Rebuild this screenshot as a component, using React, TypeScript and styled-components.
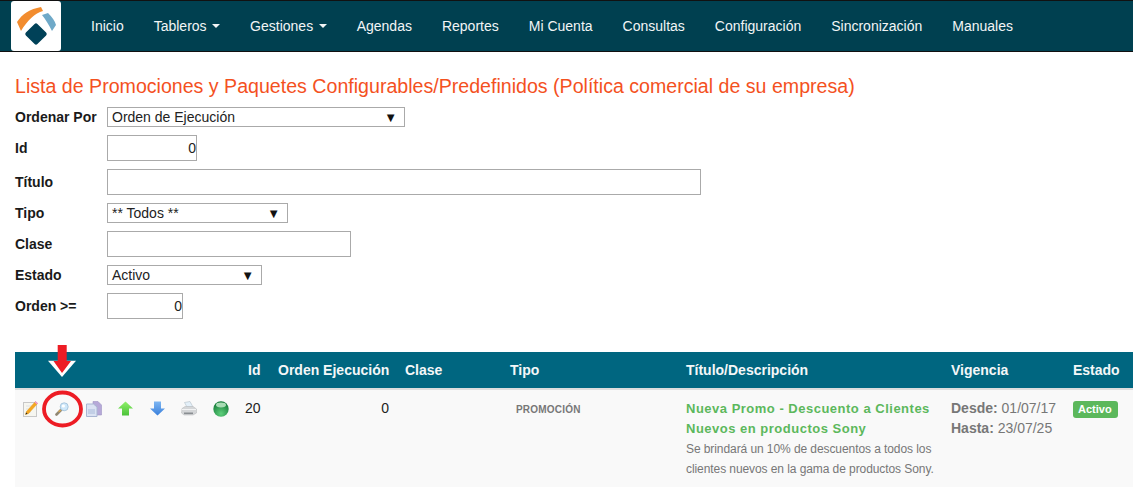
import React from 'react';
import styled, { createGlobalStyle } from 'styled-components';

const GlobalStyle = createGlobalStyle`
  html, body {
    margin: 0;
    padding: 0;
    background: #fff;
    overflow: hidden;
    font-family: "Liberation Sans", Arial, sans-serif;
    font-size: 14px;
    color: #333;
  }
`;

const Page = styled.div`
  position: relative;
  width: 1133px;
  height: 487px;
  overflow: hidden;
`;

const Navbar = styled.nav`
  display: flex;
  align-items: center;
  height: 50px;
  padding-left: 11px;
  background: #004050;
  border-top: 1px solid #111;
  border-bottom: 1px solid #111;
`;

const LogoBox = styled.div`
  display: flex;
  align-items: center;
  justify-content: center;
  width: 50px;
  height: 50px;
  margin-right: 15px;
  background: #fff;
  border-radius: 3px;
`;

const NavLink = styled.a`
  display: flex;
  align-items: center;
  padding: 0 15px;
  color: #f2f5f6;
  font-size: 14px;
  white-space: nowrap;
`;

const Caret = styled.span`
  display: inline-block;
  margin-left: 5.5px;
  border-top: 4px solid #f2f5f6;
  border-left: 4px solid transparent;
  border-right: 4px solid transparent;
`;

const Content = styled.main`
  padding: 21px 0 0 15px;
`;

const Title = styled.h1`
  margin: 0 0 4px;
  font-size: 19.6px;
  font-weight: 400;
  line-height: 26px;
  color: #f4511e;
`;

const FormRow = styled.div<{ $height: number }>`
  display: flex;
  align-items: center;
  height: ${p => p.$height}px;
`;

const Label = styled.label`
  width: 92px;
  font-size: 14px;
  font-weight: 700;
  color: #1a1a1a;
`;

const TextInput = styled.input<{ $width: number; $number?: boolean }>`
  box-sizing: border-box;
  width: ${p => p.$width}px;
  height: 26px;
  padding: 0 0 0 4px;
  border: 1px solid #aaa;
  background: #fff;
  font-family: inherit;
  font-size: 14px;
  color: #222;
  text-align: ${p => (p.$number ? 'right' : 'left')};
  outline: none;
`;

const SelectBox = styled.div<{ $width: number }>`
  box-sizing: border-box;
  display: flex;
  align-items: center;
  justify-content: space-between;
  width: ${p => p.$width}px;
  height: 20px;
  padding: 0 7px 0 4px;
  border: 1px solid #aaa;
  font-size: 14px;
  color: #222;
`;

const SelectArrow = styled.span`
  font-size: 13px;
  color: #111;
`;

const TableArea = styled.div`
  margin-top: 29px;
`;

const GRID_COLUMNS = '225px 30px 127px 105px 176px 265px 122px 68px';

const TableHead = styled.div`
  display: grid;
  grid-template-columns: ${GRID_COLUMNS};
  align-items: center;
  height: 36px;
  background: #006680;
  border-bottom: 2px solid #ddd;
`;

const HeadCell = styled.div`
  padding-left: 8px;
  font-size: 14px;
  font-weight: 700;
  color: #f4f7f8;
  white-space: nowrap;
`;

const TableRow = styled.div`
  display: grid;
  grid-template-columns: ${GRID_COLUMNS};
  align-items: start;
  height: 110px;
  padding-top: 8px;
  background: #f9f9f9;
`;

const Cell = styled.div<{ $right?: boolean }>`
  padding: 0 8px;
  font-size: 14px;
  line-height: 20px;
  color: #222;
  text-align: ${p => (p.$right ? 'right' : 'left')};
`;

const IdCell = styled(Cell)`
  padding: 0 0 0 5px;
`;

const PromoCell = styled(Cell)`
  padding-right: 4px;
`;

const IconRow = styled.div`
  display: flex;
  align-items: center;
  height: 17px;
  padding: 2px 0 0 8px;
`;

const IconSlot = styled.span`
  display: flex;
  flex: 0 0 31.7px;
`;

const TypeTag = styled.span`
  display: block;
  padding: 2px 0 0 6px;
  font-size: 10px;
  font-weight: 700;
  letter-spacing: 0.2px;
  color: #777;
`;

const PromoTitle = styled.div`
  margin-top: 1px;
  font-size: 13px;
  font-weight: 700;
  letter-spacing: 0.5px;
  line-height: 20px;
  color: #5cb85c;
`;

const PromoText = styled.div`
  font-size: 12px;
  line-height: 20px;
  letter-spacing: -0.08px;
  color: #777;
`;

const DateLine = styled.div`
  font-size: 14px;
  line-height: 20px;
  color: #777;
  white-space: nowrap;
  b {
    font-weight: 700;
  }
`;

const Badge = styled.span`
  display: inline-block;
  margin-top: 3px;
  padding: 0 6px 0 5px;
  height: 17px;
  line-height: 17px;
  border-radius: 3px;
  background: #5cb85c;
  color: #fff;
  font-size: 11px;
  font-weight: 700;
`;

// the arrow and the ring are marks drawn over the screenshot
const Annotation = styled.svg`
  position: absolute;
  left: 40px;
  top: 340px;
  pointer-events: none;
`;

const Logo = () => (
  <svg width="50" height="50" viewBox="0 0 50 50">
    <path d="M6 21 C11 13 19 8 30 6 L32 10 C24 12 16 20 10 30 Z" fill="#f28c2e" />
    <path d="M31 14 L37 12 C41 16 44 20 45 24 L41 30 C38 24 35 19 31 14 Z" fill="#6fa9c8" />
    <rect x="16.85" y="24.85" width="16.3" height="16.3" rx="2" fill="#004158" transform="rotate(45 25 33)" />
  </svg>
);

const EditIcon = () => (
  <svg width="16" height="17" viewBox="0 0 16 17">
    <rect x="0.5" y="2.5" width="13" height="14" fill="#f6f6f0" stroke="#c8c8c8" />
    <path d="M3 6h8M3 9h6M3 12h5" stroke="#e2e2e2" />
    <path d="M12.5 1.5 L14.5 3.5 L5.5 13.5 L2.5 14.5 L3.5 11.5 Z" fill="#f5a623" stroke="#e09a10" strokeWidth="0.5" />
    <path d="M12.5 1 L15 3.2 L14 4.5 L11.5 2.2 Z" fill="#ee9ad0" />
    <path d="M2.5 14.5 L3.2 12.5 L4.6 13.8 Z" fill="#222" />
  </svg>
);

const SearchIcon = () => (
  <svg width="14" height="14" viewBox="0 0 14 14">
    <path d="M1.5 12.5 L6 8" stroke="#8f8672" strokeWidth="2.6" strokeLinecap="round" />
    <path d="M3.5 10 L6 7.8" stroke="#d9a650" strokeWidth="1.4" />
    <circle cx="9.2" cy="4.8" r="4" fill="#cfe8fa" stroke="#9dbdd6" strokeWidth="0.8" />
    <circle cx="8.4" cy="4" r="1.6" fill="#fff" />
  </svg>
);

const CopyIcon = () => (
  <svg width="16" height="16" viewBox="0 0 16 16">
    <path d="M7 0.5 H12 L15.5 4 V14 H7 Z" fill="#b6a9d8" stroke="#a095c5" strokeWidth="0.6" />
    <path d="M0.5 3 H7.5 L11 6 V15.5 H0.5 Z" fill="#dbe3f3" stroke="#a9b6d2" />
    <rect x="2" y="8" width="7" height="5" fill="#c2cfe6" />
  </svg>
);

const ArrowUpIcon = () => (
  <svg width="15" height="15" viewBox="0 0 15 15">
    <defs>
      <linearGradient id="up" x1="0" y1="0" x2="0" y2="1">
        <stop offset="0" stopColor="#8ff06a" />
        <stop offset="1" stopColor="#4cc23a" />
      </linearGradient>
    </defs>
    <path d="M7.5 0.5 L15 7.5 H11 V14.5 H4 V7.5 H0 Z" fill="url(#up)" />
  </svg>
);

const ArrowDownIcon = () => (
  <svg width="15" height="15" viewBox="0 0 15 15">
    <defs>
      <linearGradient id="down" x1="0" y1="0" x2="0" y2="1">
        <stop offset="0" stopColor="#7db6f2" />
        <stop offset="1" stopColor="#3a80dc" />
      </linearGradient>
    </defs>
    <path d="M4 0.5 H11 V7.5 H15 L7.5 14.5 L0 7.5 H4 Z" fill="url(#down)" />
  </svg>
);

const PrinterIcon = () => (
  <svg width="16" height="15" viewBox="0 0 16 15">
    <path d="M3.5 1.5 L9 0.5 L12 6 H6 Z" fill="#e4f0f9" stroke="#b4c0c8" strokeWidth="0.6" />
    <path d="M1 7.5 L4 5.5 H12 L15.5 8 V12 L12 14 H3 L0.5 12 Z" fill="#d4d6d8" stroke="#b4b6b8" strokeWidth="0.5" />
    <path d="M1 8.5 H15" stroke="#f2f3f4" />
    <rect x="3" y="11.5" width="9" height="1.6" fill="#8a8e92" />
  </svg>
);

const StatusIcon = () => (
  <svg width="16" height="16" viewBox="0 0 16 16">
    <defs>
      <radialGradient id="ball" cx="0.5" cy="0.8" r="0.75">
        <stop offset="0" stopColor="#5fd07c" />
        <stop offset="1" stopColor="#147a38" />
      </radialGradient>
    </defs>
    <circle cx="8" cy="8" r="7.7" fill="url(#ball)" />
    <ellipse cx="8" cy="4" rx="5" ry="2.4" fill="#a8dcb4" />
  </svg>
);

const ACTIONS = [EditIcon, SearchIcon, CopyIcon, ArrowUpIcon, ArrowDownIcon, PrinterIcon, StatusIcon];
const NAV_ITEMS = [
  { label: 'Inicio' },
  { label: 'Tableros', menu: true },
  { label: 'Gestiones', menu: true },
  { label: 'Agendas' },
  { label: 'Reportes' },
  { label: 'Mi Cuenta' },
  { label: 'Consultas' },
  { label: 'Configuración' },
  { label: 'Sincronización' },
  { label: 'Manuales' },
];
const COLUMNS = ['', 'Id', 'Orden Ejecución', 'Clase', 'Tipo', 'Título/Descripción', 'Vigencia', 'Estado'];

export default function App() {
  return (
    <Page>
      <GlobalStyle />
      <Navbar>
        <LogoBox>
          <Logo />
        </LogoBox>
        {NAV_ITEMS.map(item => (
          <NavLink key={item.label}>
            {item.label}
            {item.menu && <Caret />}
          </NavLink>
        ))}
      </Navbar>
      <Content>
        <Title>Lista de Promociones y Paquetes Configurables/Predefinidos (Política comercial de su empresa)</Title>
        <FormRow $height={28}>
          <Label>Ordenar Por</Label>
          <SelectBox $width={298}>
            Orden de Ejecución
            <SelectArrow>▼</SelectArrow>
          </SelectBox>
        </FormRow>
        <FormRow $height={34}>
          <Label>Id</Label>
          <TextInput $width={90} $number readOnly value="0" />
        </FormRow>
        <FormRow $height={34}>
          <Label>Título</Label>
          <TextInput $width={594} readOnly value="" />
        </FormRow>
        <FormRow $height={28}>
          <Label>Tipo</Label>
          <SelectBox $width={181}>
            ** Todos **
            <SelectArrow>▼</SelectArrow>
          </SelectBox>
        </FormRow>
        <FormRow $height={34}>
          <Label>Clase</Label>
          <TextInput $width={244} readOnly value="" />
        </FormRow>
        <FormRow $height={28}>
          <Label>Estado</Label>
          <SelectBox $width={155}>
            Activo
            <SelectArrow>▼</SelectArrow>
          </SelectBox>
        </FormRow>
        <FormRow $height={34}>
          <Label>Orden &gt;=</Label>
          <TextInput $width={76} $number readOnly value="0" />
        </FormRow>
        <TableArea>
          <TableHead>
            {COLUMNS.map((col, i) => (
              <HeadCell key={i}>{col}</HeadCell>
            ))}
          </TableHead>
          <TableRow>
            <IconRow>
              {ACTIONS.map((Icon, i) => (
                <IconSlot key={i}>
                  <Icon />
                </IconSlot>
              ))}
            </IconRow>
            <IdCell>20</IdCell>
            <Cell $right>0</Cell>
            <Cell />
            <Cell>
              <TypeTag>PROMOCIÓN</TypeTag>
            </Cell>
            <PromoCell>
              <PromoTitle>Nueva Promo - Descuento a Clientes Nuevos en productos Sony</PromoTitle>
              <PromoText>Se brindará un 10% de descuentos a todos los clientes nuevos en la gama de productos Sony.</PromoText>
            </PromoCell>
            <Cell>
              <DateLine>
                <b>Desde:</b> 01/07/17
              </DateLine>
              <DateLine>
                <b>Hasta:</b> 23/07/25
              </DateLine>
            </Cell>
            <Cell>
              <Badge>Activo</Badge>
            </Cell>
          </TableRow>
        </TableArea>
      </Content>
      <Annotation width="60" height="90" viewBox="0 0 60 90">
        <path d="M8 20.7 H36 L22 37 Z" fill="#fff" />
        <path d="M17.7 5 H26.7 V21 H31 L22 33 L13.5 21 H17.7 Z" fill="#ed1c24" />
        <ellipse cx="22.5" cy="69" rx="18.5" ry="16.5" fill="none" stroke="#ed1c24" strokeWidth="3.8" />
      </Annotation>
    </Page>
  );
}
